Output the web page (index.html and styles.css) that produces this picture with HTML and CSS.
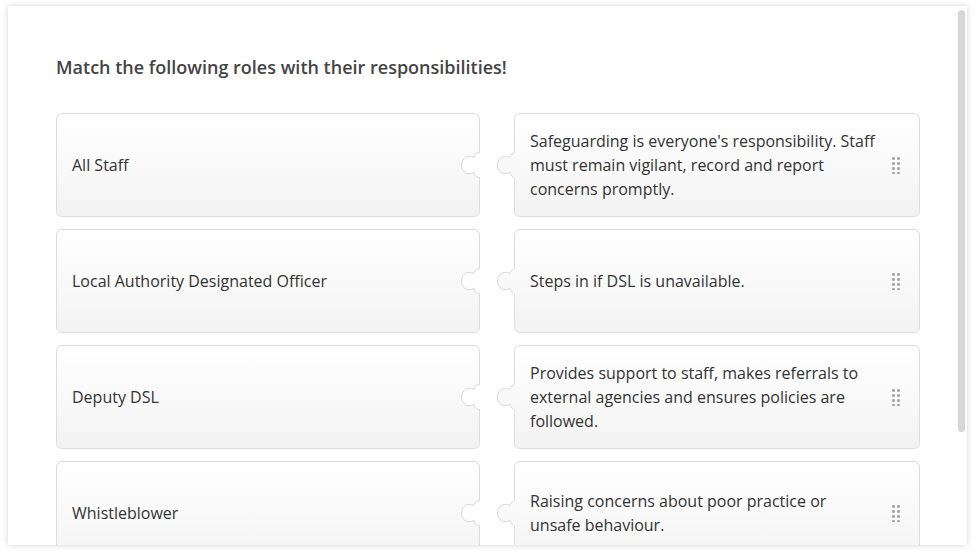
FILE: index.html
```html
<!DOCTYPE html>
<html lang="en">
<head>
    <meta charset="UTF-8">
    <meta name="viewport" content="width=device-width, initial-scale=1.0">
    <title>Match the roles</title>
    <link rel="stylesheet" href="styles.css">
</head>
<body>
    <div class="panel">
        <div class="quiz">
            <h2 class="question">Match the following roles with their responsibilities!</h2>
            <div class="match-list">
                <div class="match-row">
                    <div class="card role">
                        <span>All Staff</span>
                        <svg class="socket" width="20" height="28" viewBox="0 0 20 28"><path class="fill" d="M20 1 C16.5 1 14.5 3 14 6.5 C7 3 1.5 7.5 1.5 14 C1.5 20.5 7 25 14 21.5 C14.5 25 16.5 27 20 27 Z"/><path class="edge" d="M20 1.5 C16.5 1.5 14.5 3 14 6.5 C7 3 1.5 7.5 1.5 14 C1.5 20.5 7 25 14 21.5 C14.5 25 16.5 26.5 20 26.5"/></svg>
                    </div>
                    <div class="card answer">
                        <svg class="tab" width="20" height="28" viewBox="0 0 20 28"><path class="fill" d="M20 1 C16.5 1 14.5 3 14 6.5 C7 3 1.5 7.5 1.5 14 C1.5 20.5 7 25 14 21.5 C14.5 25 16.5 27 20 27 Z"/><path class="edge" d="M18.5 1 C17 2 15 3.5 14 6.5 C7 3 1.5 7.5 1.5 14 C1.5 20.5 7 25 14 21.5 C15 24.5 17 26 18.5 27"/></svg>
                        <span>Safeguarding is everyone's responsibility. Staff must remain vigilant, record and report concerns promptly.</span>
                        <i class="handle"></i>
                    </div>
                </div>
                <div class="match-row">
                    <div class="card role">
                        <span>Local Authority Designated Officer</span>
                        <svg class="socket" width="20" height="28" viewBox="0 0 20 28"><path class="fill" d="M20 1 C16.5 1 14.5 3 14 6.5 C7 3 1.5 7.5 1.5 14 C1.5 20.5 7 25 14 21.5 C14.5 25 16.5 27 20 27 Z"/><path class="edge" d="M20 1.5 C16.5 1.5 14.5 3 14 6.5 C7 3 1.5 7.5 1.5 14 C1.5 20.5 7 25 14 21.5 C14.5 25 16.5 26.5 20 26.5"/></svg>
                    </div>
                    <div class="card answer">
                        <svg class="tab" width="20" height="28" viewBox="0 0 20 28"><path class="fill" d="M20 1 C16.5 1 14.5 3 14 6.5 C7 3 1.5 7.5 1.5 14 C1.5 20.5 7 25 14 21.5 C14.5 25 16.5 27 20 27 Z"/><path class="edge" d="M18.5 1 C17 2 15 3.5 14 6.5 C7 3 1.5 7.5 1.5 14 C1.5 20.5 7 25 14 21.5 C15 24.5 17 26 18.5 27"/></svg>
                        <span>Steps in if DSL is unavailable.</span>
                        <i class="handle"></i>
                    </div>
                </div>
                <div class="match-row">
                    <div class="card role">
                        <span>Deputy DSL</span>
                        <svg class="socket" width="20" height="28" viewBox="0 0 20 28"><path class="fill" d="M20 1 C16.5 1 14.5 3 14 6.5 C7 3 1.5 7.5 1.5 14 C1.5 20.5 7 25 14 21.5 C14.5 25 16.5 27 20 27 Z"/><path class="edge" d="M20 1.5 C16.5 1.5 14.5 3 14 6.5 C7 3 1.5 7.5 1.5 14 C1.5 20.5 7 25 14 21.5 C14.5 25 16.5 26.5 20 26.5"/></svg>
                    </div>
                    <div class="card answer">
                        <svg class="tab" width="20" height="28" viewBox="0 0 20 28"><path class="fill" d="M20 1 C16.5 1 14.5 3 14 6.5 C7 3 1.5 7.5 1.5 14 C1.5 20.5 7 25 14 21.5 C14.5 25 16.5 27 20 27 Z"/><path class="edge" d="M18.5 1 C17 2 15 3.5 14 6.5 C7 3 1.5 7.5 1.5 14 C1.5 20.5 7 25 14 21.5 C15 24.5 17 26 18.5 27"/></svg>
                        <span>Provides support to staff, makes referrals to external agencies and ensures policies are followed.</span>
                        <i class="handle"></i>
                    </div>
                </div>
                <div class="match-row">
                    <div class="card role">
                        <span>Whistleblower</span>
                        <svg class="socket" width="20" height="28" viewBox="0 0 20 28"><path class="fill" d="M20 1 C16.5 1 14.5 3 14 6.5 C7 3 1.5 7.5 1.5 14 C1.5 20.5 7 25 14 21.5 C14.5 25 16.5 27 20 27 Z"/><path class="edge" d="M20 1.5 C16.5 1.5 14.5 3 14 6.5 C7 3 1.5 7.5 1.5 14 C1.5 20.5 7 25 14 21.5 C14.5 25 16.5 26.5 20 26.5"/></svg>
                    </div>
                    <div class="card answer">
                        <svg class="tab" width="20" height="28" viewBox="0 0 20 28"><path class="fill" d="M20 1 C16.5 1 14.5 3 14 6.5 C7 3 1.5 7.5 1.5 14 C1.5 20.5 7 25 14 21.5 C14.5 25 16.5 27 20 27 Z"/><path class="edge" d="M18.5 1 C17 2 15 3.5 14 6.5 C7 3 1.5 7.5 1.5 14 C1.5 20.5 7 25 14 21.5 C15 24.5 17 26 18.5 27"/></svg>
                        <span>Raising concerns about poor practice or unsafe behaviour.</span>
                        <i class="handle"></i>
                    </div>
                </div>
            </div>
        </div>
        <div class="scroll-thumb"></div>
    </div>
</body>
</html>
```

FILE: styles.css
```css
body {
    margin: 0;
    padding: 6px 9px 12px 8px;
    background: #fff;
    font-family: "Open Sans", Arial, sans-serif;
    color: #333;
}
.panel {
    position: relative;
    width: 959px;
    height: 539px;
    overflow: hidden;
    background: #fff;
    box-shadow: 0 0 6px rgba(0, 0, 0, 0.18);
}
/* scrollbars are hidden in the capture, so the thumb is drawn by hand */
.scroll-thumb {
    position: absolute;
    top: 4px;
    right: 2px;
    width: 7px;
    height: 422px;
    border-radius: 4px;
    background: #d6d6d6;
}
.quiz {
    padding: 49px 0 116px 48px;
}
.question {
    margin: 0 0 34px;
    font-size: 18px;
    font-weight: 600;
    line-height: 24px;
    color: #444;
}
.match-list {
    display: flex;
    flex-direction: column;
    gap: 12px;
}
.match-row {
    display: grid;
    grid-template-columns: 424px 406px;
    column-gap: 34px;
}
.card {
    position: relative;
    box-sizing: border-box;
    height: 104px;
    display: flex;
    align-items: center;
    padding: 0 15px;
    border: 1px solid #dcdcdc;
    border-radius: 6px;
    background: linear-gradient(#fff, #f3f3f3);
    font-size: 16px;
    line-height: 24px;
    color: #333;
}
.card.answer {
    padding-right: 39px;
}
.card svg {
    position: absolute;
    top: 50%;
    margin-top: -14px;
}
.socket {
    right: -1px;
}
.socket .fill {
    fill: #fff;
}
.tab {
    left: -19px;
}
.tab .fill {
    fill: #f9f9f9;
}
.card .edge {
    fill: none;
    stroke: #d8d8d8;
    stroke-width: 1;
}
.handle {
    position: absolute;
    right: 19px;
    top: 50%;
    margin-top: -9px;
    width: 8px;
    height: 18px;
    background-image: radial-gradient(circle, #a5a5a5 1.3px, transparent 1.6px);
    background-size: 5px 5px;
    background-position: -1px 0;
}
```
